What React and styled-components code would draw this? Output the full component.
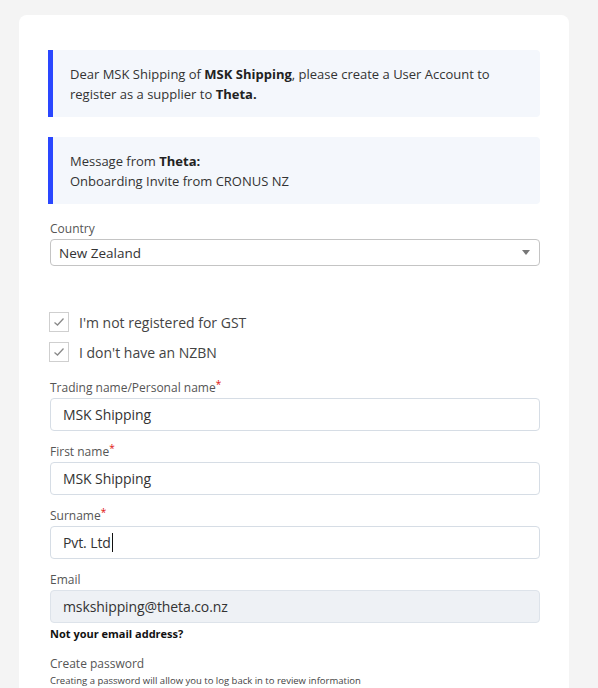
import React from 'react';
import styled, {createGlobalStyle} from 'styled-components';

const GlobalStyle = createGlobalStyle`
  body {
    margin: 0;
    background: #f4f4f4;
    font-family: "Open Sans", "Noto Sans", sans-serif;
  }
`;

const Page = styled.div`
  padding: 15px 29px 0 19px;
`;

const Card = styled.div`
  background: #fff;
  border-radius: 8px 8px 0 0;
  padding: 35px 29px 0 29px;
  min-height: 673px;
  box-sizing: border-box;
`;

const Notice = styled.div`
  background: #f4f7fc;
  border-left: 5px solid #2a47ff;
  border-radius: 0 4px 4px 0;
  padding: 14px 16px 13px 17px;
  font-size: 13px;
  line-height: 20px;
  color: #333;
  margin-bottom: ${p => p.$gap || 0}px;

  b {
    font-weight: 700;
    color: #222;
  }
`;

const Form = styled.div`
  padding-left: 2px;
`;

const Label = styled.div`
  font-size: 12px;
  line-height: 17px;
  color: #555;
  margin-top: ${p => p.$top || 0}px;
  margin-bottom: 2px;
`;

const Required = styled.span`
  color: #e01010;
  font-size: 10px;
  vertical-align: top;
  line-height: 11px;
`;

const Select = styled.div`
  height: 27px;
  box-sizing: border-box;
  border: 1px solid #c4c4c4;
  border-radius: 4px;
  display: flex;
  align-items: center;
  justify-content: space-between;
  padding: 0 9px 0 8px;
  font-size: 13.5px;
  color: #333;
`;

const Arrow = styled.span`
  width: 0;
  height: 0;
  border-left: 4px solid transparent;
  border-right: 4px solid transparent;
  border-top: 5px solid #777;
`;

const Checks = styled.div`
  display: flex;
  flex-direction: column;
  gap: 10px;
  margin: 46px 0 17px;
`;

const CheckRow = styled.label`
  display: flex;
  align-items: center;
  gap: 10px;
  font-size: 14px;
  color: #444;
  margin-left: -1px;
`;

const Box = styled.span`
  width: 20px;
  height: 20px;
  box-sizing: border-box;
  border: 1px solid #cfcfcf;
  display: flex;
  align-items: center;
  justify-content: center;
`;

const TextBox = styled.div`
  height: 33px;
  box-sizing: border-box;
  border: 1px solid ${p => (p.$disabled ? '#dde3ea' : '#d6dde5')};
  background: ${p => (p.$disabled ? '#eef1f5' : '#fff')};
  border-radius: 4px;
  display: flex;
  align-items: center;
  padding: 0 12px;
  font-size: 14px;
  letter-spacing: -0.1px;
  color: #333;
  margin-bottom: 12px;
`;

const Caret = styled.span`
  display: inline-block;
  width: 1px;
  height: 19px;
  background: #111;
  margin-left: 1px;
`;

const Hint = styled.div`
  font-size: 11px;
  line-height: 16px;
  font-weight: 700;
  color: #111;
  margin-top: -9px;
`;

const Small = styled.div`
  font-size: 9.5px;
  color: #444;
  line-height: 13px;
`;

const Check = () => (
  <Box>
    <svg width="12" height="10" viewBox="0 0 12 10" fill="none">
      <path d="M1.5 5.5 L4.5 8 L10.5 1.5" stroke="#8a8a8a" strokeWidth="1.3" />
    </svg>
  </Box>
);

const Field = ({label, value, required, disabled, caret}) => (
  <>
    <Label>
      {label}
      {required && <Required>*</Required>}
    </Label>
    <TextBox $disabled={disabled}>
      {value}
      {caret && <Caret />}
    </TextBox>
  </>
);

export default function App() {
  return (
    <>
      <GlobalStyle />
      <Page>
        <Card>
          <Notice $gap={20}>
            Dear MSK Shipping of <b>MSK Shipping</b>, please create a User Account to register as a supplier to <b>Theta.</b>
          </Notice>
          <Notice>
            Message from <b>Theta:</b>
            <br />
            Onboarding Invite from CRONUS NZ
          </Notice>
          <Form>
            <Label $top={16}>Country</Label>
            <Select>
              New Zealand
              <Arrow />
            </Select>
            <Checks>
              <CheckRow>
                <Check />
                I'm not registered for GST
              </CheckRow>
              <CheckRow>
                <Check />
                I don't have an NZBN
              </CheckRow>
            </Checks>
            <Field label="Trading name/Personal name" value="MSK Shipping" required />
            <Field label="First name" value="MSK Shipping" required />
            <Field label="Surname" value="Pvt. Ltd" required caret />
            <Field label="Email" value="mskshipping@theta.co.nz" disabled />
            <Hint>Not your email address?</Hint>
            <Label $top={13}>Create password</Label>
            <Small>Creating a password will allow you to log back in to review information</Small>
          </Form>
        </Card>
      </Page>
    </>
  );
}
